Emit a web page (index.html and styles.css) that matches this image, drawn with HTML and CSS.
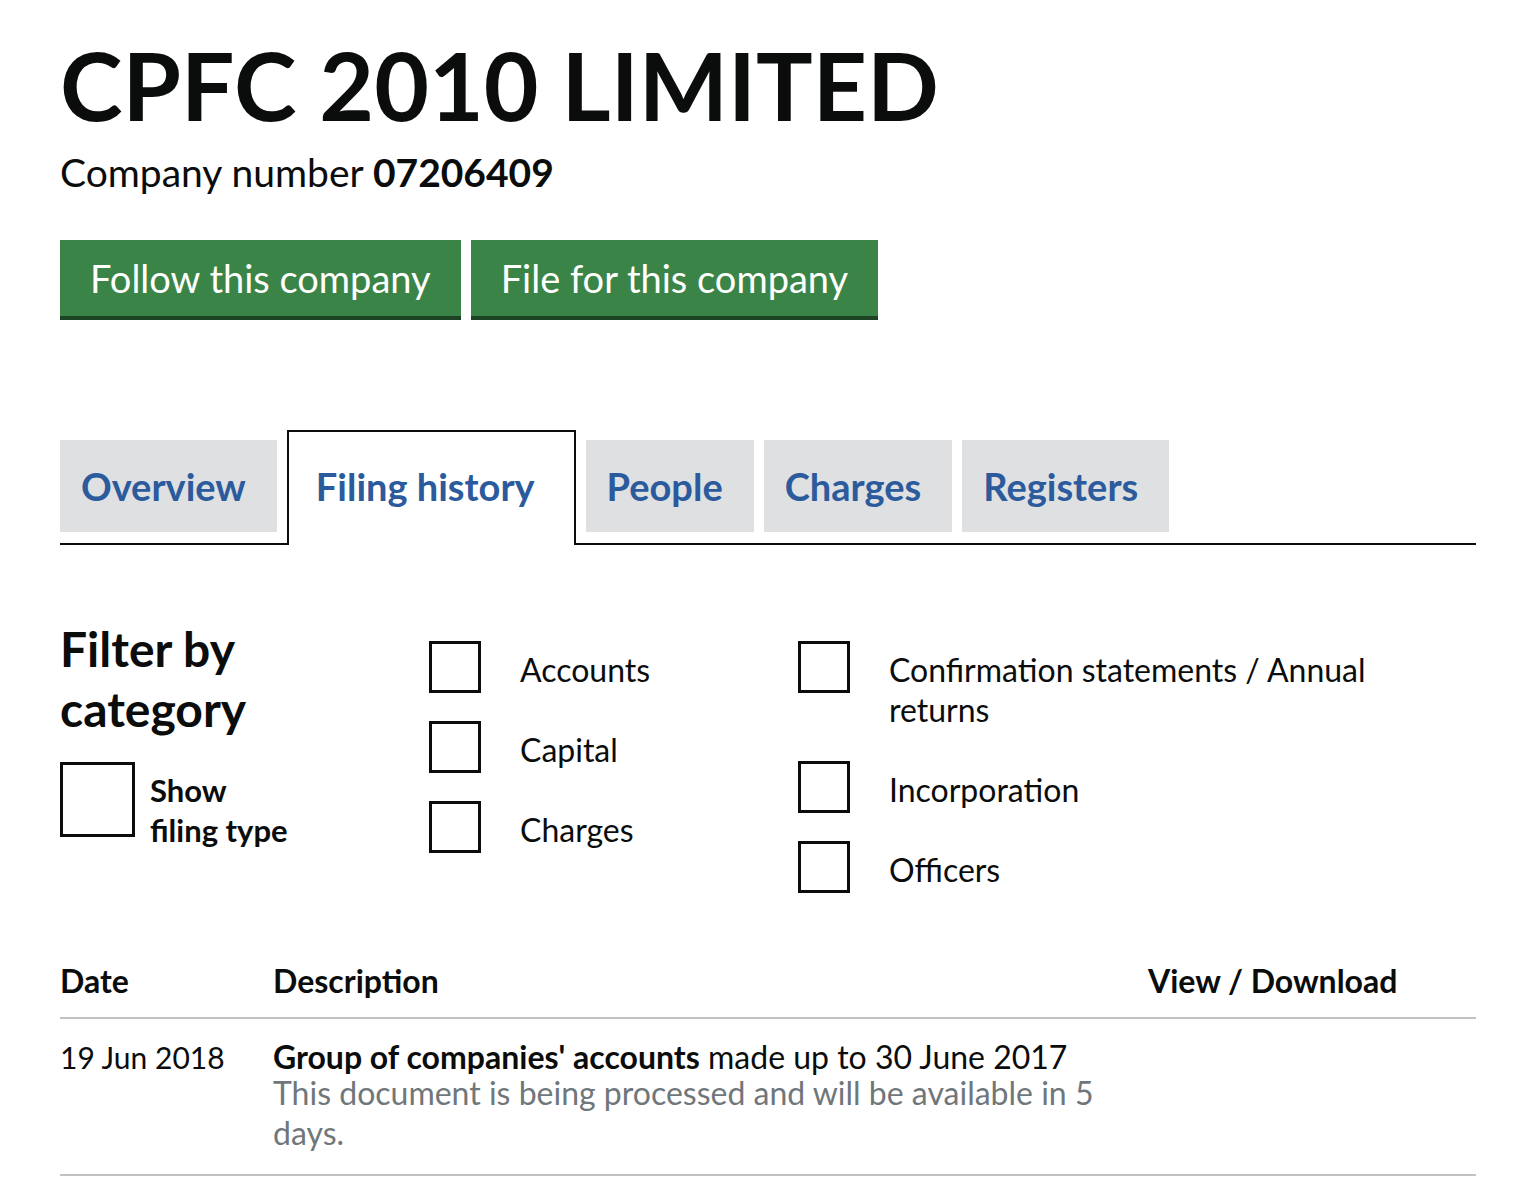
FILE: index.html
```html
<!DOCTYPE html>
<html lang="en">
<head>
<meta charset="utf-8">
<title>CPFC 2010 LIMITED - Filing history</title>
<link rel="stylesheet" href="styles.css">
</head>
<body>
<main class="page">
  <h1 class="title">CPFC 2010 LIMITED</h1>
  <p class="company-number">Company number <strong>07206409</strong></p>
  <div class="actions">
    <a class="button" href="#">Follow this company</a>
    <a class="button" href="#">File for this company</a>
  </div>

  <nav class="tabs">
    <a class="tab" href="#">Overview</a>
    <a class="tab active" href="#">Filing history</a>
    <a class="tab" href="#">People</a>
    <a class="tab" href="#">Charges</a>
    <a class="tab" href="#">Registers</a>
  </nav>

  <section class="filters">
    <div class="filter-intro">
      <h2 class="filter-heading">Filter by category</h2>
      <label class="show-type">
        <span class="box box-large"></span>
        <span class="show-label">Show<br>filing type</span>
      </label>
    </div>
    <div class="filter-col">
      <label class="check"><span class="box"></span><span class="check-label">Accounts</span></label>
      <label class="check"><span class="box"></span><span class="check-label">Capital</span></label>
      <label class="check"><span class="box"></span><span class="check-label">Charges</span></label>
    </div>
    <div class="filter-col">
      <label class="check"><span class="box"></span><span class="check-label">Confirmation statements / Annual returns</span></label>
      <label class="check"><span class="box"></span><span class="check-label">Incorporation</span></label>
      <label class="check"><span class="box"></span><span class="check-label">Officers</span></label>
    </div>
  </section>

  <table class="history">
    <thead>
      <tr>
        <th class="col-date">Date</th>
        <th class="col-desc">Description</th>
        <th class="col-view">View / Download</th>
      </tr>
    </thead>
    <tbody>
      <tr>
        <td class="col-date">19 Jun 2018</td>
        <td class="col-desc">
          <div class="desc-main"><strong>Group of companies' accounts</strong> made up to 30 June 2017</div>
          <div class="desc-note">This document is being processed and will be available in 5 days.</div>
        </td>
        <td class="col-view"></td>
      </tr>
    </tbody>
  </table>
</main>
</body>
</html>
```

FILE: styles.css
```css
* { box-sizing: border-box; }

html, body {
  margin: 0;
  padding: 0;
  background: #ffffff;
}

body {
  font-family: "Lato", "Liberation Sans", Arial, sans-serif;
  color: #0b0c0c;
}

.page {
  width: 1476px;
  padding: 0 0 0 60px;
}

.title {
  margin: 37px 0 0 0;
  font-size: 94.5px;
  line-height: 96px;
  font-weight: 700;
}

.company-number {
  margin: 16px 0 0 0;
  font-size: 39px;
  line-height: 46px;
}

.company-number strong {
  font-weight: 700;
}

.actions {
  display: flex;
  gap: 10px;
  margin-top: 45px;
}

.button {
  display: flex;
  align-items: center;
  height: 76px;
  padding: 0 30px;
  background: #3b8447;
  box-shadow: 0 4px 0 #1c4424;
  color: #ffffff;
  font-size: 38px;
  text-decoration: none;
}

.tabs {
  display: flex;
  align-items: flex-end;
  gap: 10px;
  margin-top: 114px;
  border-bottom: 2px solid #0b0c0c;
}

.tab {
  display: flex;
  align-items: center;
  height: 92px;
  margin-bottom: 11px;
  padding: 0 31px 0 21px;
  background: #dee0e2;
  color: #2b5b9c;
  font-size: 38px;
  font-weight: 700;
  text-decoration: none;
}

.tab.active {
  height: 115px;
  margin-bottom: -2px;
  padding: 0 39px 5px 27px;
  background: #ffffff;
  border: 2px solid #0b0c0c;
  border-bottom: none;
}

.filters {
  display: grid;
  grid-template-columns: 369px 369px 1fr;
  margin-top: 74px;
}

.filter-heading {
  margin: 0;
  font-size: 48px;
  line-height: 60px;
  font-weight: 700;
  width: 300px;
}

.show-type {
  display: flex;
  align-items: flex-start;
  gap: 15px;
  margin-top: 23px;
}

.box {
  flex: none;
  display: block;
  width: 52px;
  height: 52px;
  border: 3px solid #0b0c0c;
  background: #ffffff;
}

.box-large {
  width: 75px;
  height: 75px;
}

.show-label {
  display: block;
  padding-top: 8px;
  font-size: 31px;
  line-height: 40px;
  font-weight: 700;
}

.filter-col {
  display: flex;
  flex-direction: column;
  padding-top: 22px;
}

.check {
  display: flex;
  align-items: flex-start;
  gap: 39px;
  padding-bottom: 28px;
}

.check-label {
  display: block;
  padding: 9px 0 3px 0;
  font-size: 32px;
  line-height: 40px;
  max-width: 500px;
}

.history {
  width: 1416px;
  margin-top: 40px;
  border-collapse: collapse;
  table-layout: fixed;
}

.history th,
.history td {
  text-align: left;
  vertical-align: top;
  padding: 0;
}

.history th {
  font-size: 32px;
  line-height: 40px;
  font-weight: 700;
  padding: 0 0 16px 0;
  border-bottom: 2px solid #bfc1c3;
}

.history td {
  font-size: 32px;
  line-height: 40px;
  padding: 22px 0 21px 0;
  border-bottom: 2px solid #bfc1c3;
}

.history td.col-date {
  font-size: 30px;
  line-height: 32px;
}

.col-date { width: 213px; }
.col-desc { width: 875px; }
.col-view { width: 328px; }

.desc-main {
  line-height: 32px;
}

.desc-main strong {
  font-weight: 700;
}

.desc-note {
  color: #6f777b;
}
```
